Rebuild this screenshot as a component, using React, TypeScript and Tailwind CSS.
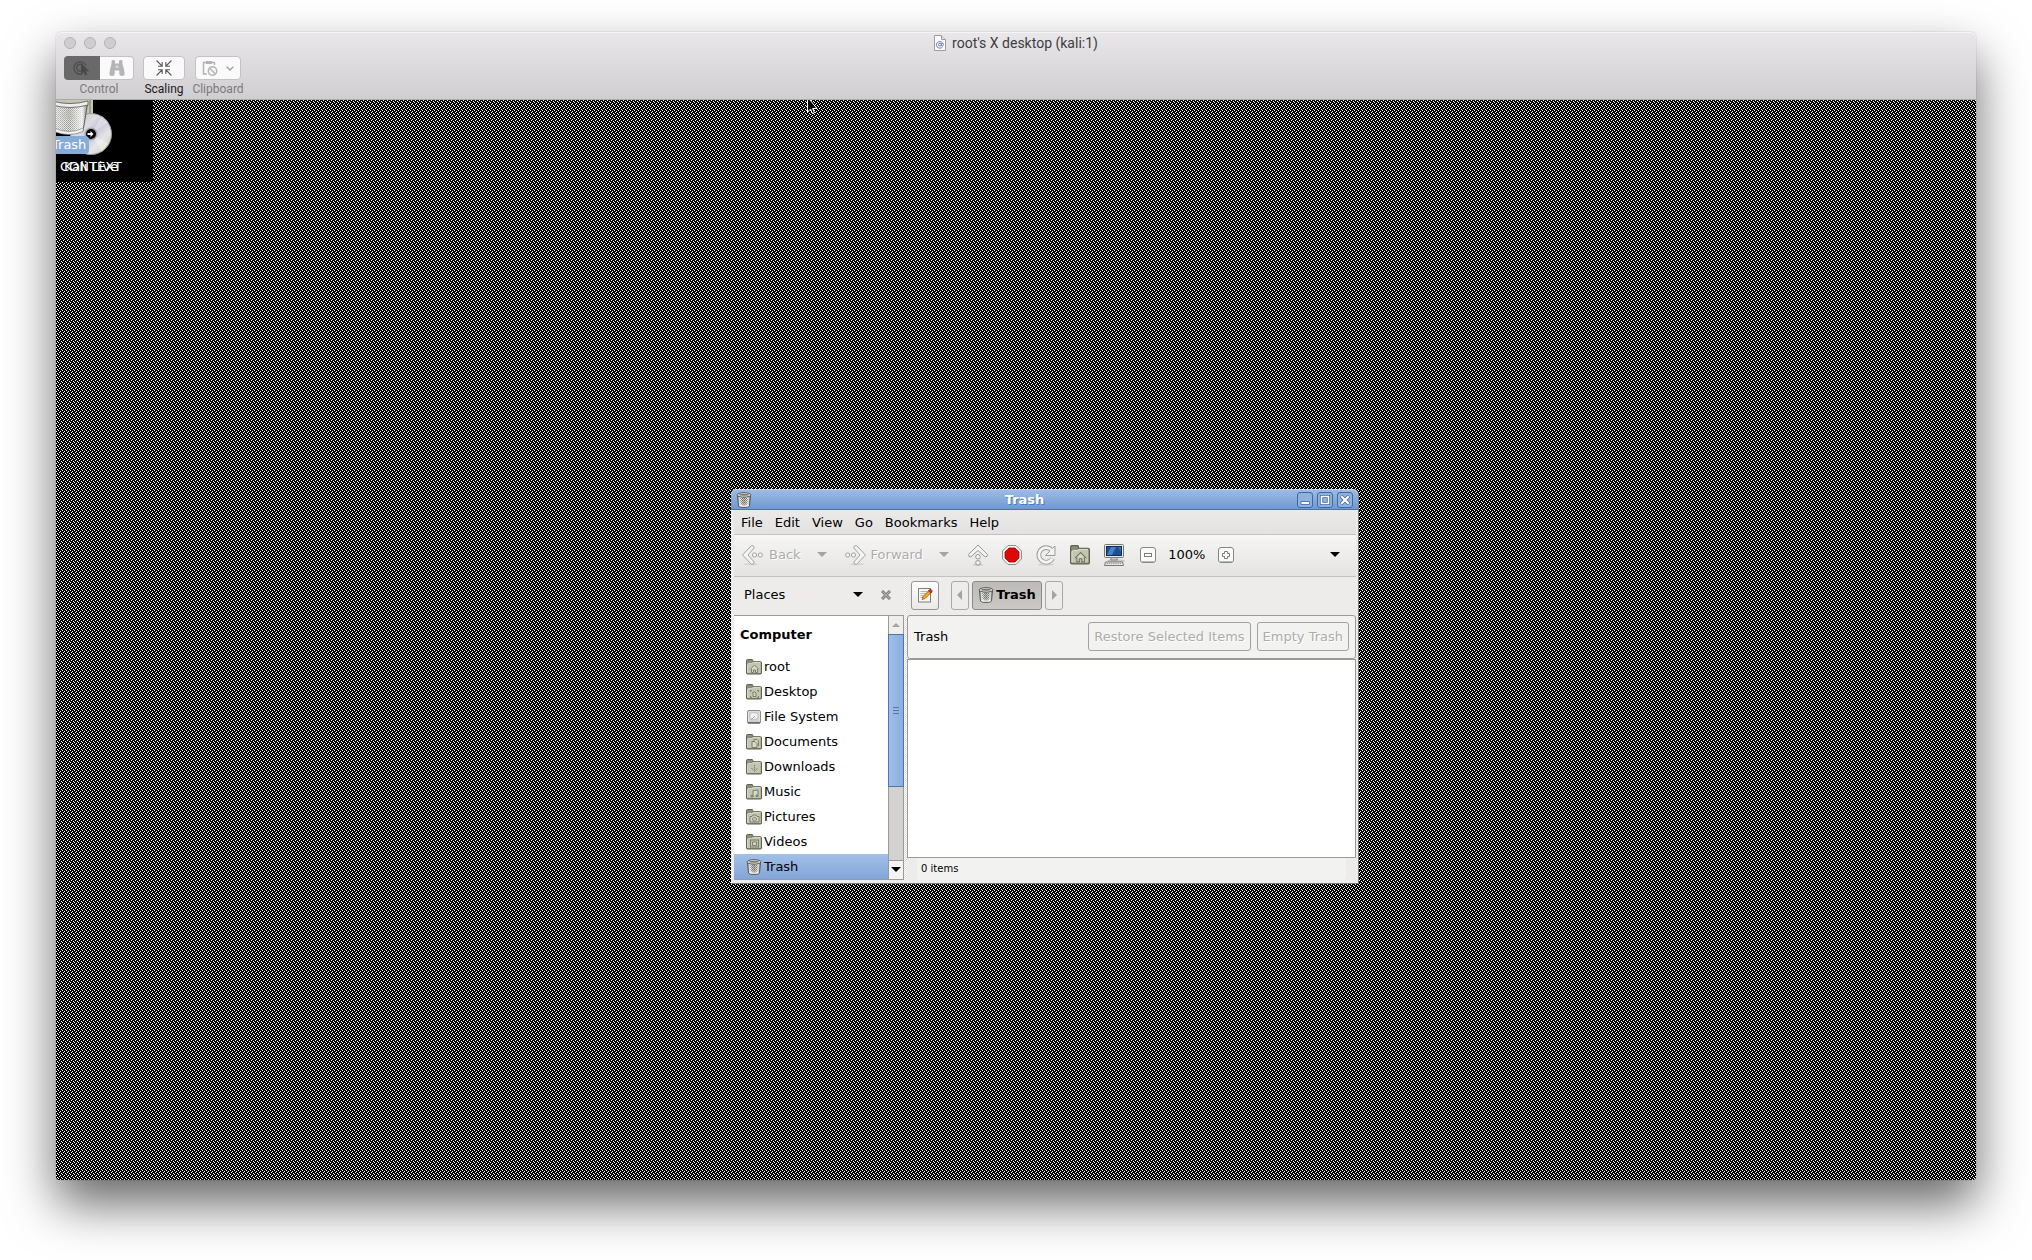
import React from 'react';

const TrashIcon: React.FC<{ className?: string }> = ({ className }) => (
  <svg className={className} viewBox="0 0 16 16" aria-hidden="true">
    <defs>
      <linearGradient id="binBody" x1="0" x2="1" y1="0" y2="0">
        <stop offset="0" stopColor="#8d8f8a" />
        <stop offset=".2" stopColor="#f4f4f2" />
        <stop offset=".5" stopColor="#b4b6b1" />
        <stop offset=".8" stopColor="#f0f0ee" />
        <stop offset="1" stopColor="#7c7e7a" />
      </linearGradient>
      <pattern id="binMesh" width="2" height="2" patternUnits="userSpaceOnUse">
        <rect width="1" height="1" fill="#4a4c48" />
        <rect x="1" y="1" width="1" height="1" fill="#6b6d69" />
      </pattern>
    </defs>
    <path d="M1.500 3.500 2.500 14c.6 1.900 10.400 1.900 11 0l1-10.500z" fill="url(#binBody)" stroke="#4a4c48" strokeWidth=".9" />
    <path d="M4 5.500h8l-.6 7H4.600z" fill="url(#binMesh)" opacity=".7" />
    <ellipse cx="8" cy="2.900" rx="7" ry="2.200" fill="#eeeeec" stroke="#4a4c48" strokeWidth=".9" />
    <ellipse cx="8" cy="2.800" rx="5" ry="1" fill="#7a7c78" />
    <path d="M3.200 13.400c2 1.200 7.600 1.200 9.600 0" fill="none" stroke="#f4f4f2" strokeWidth=".9" />
  </svg>
);

const folderGlyphs: Record<string, React.ReactNode> = {
  home: <path d="M4 10.500 8.500 6l4.500 4.500M5.500 10v3.500h2v-2.500h2v2.500h2V10" />,
  desktop: <path d="M4.500 8V6.500H6M11 6.500h1.500V8M12.500 12v1.500H11M6 13.500H4.500V12M7 8h2l1 1v3.500H7z" />,
  documents: <path d="M6 13.500v-6h3l2 2v4zM8 7V5.500h3l1.500 1.500v4.500H11.500" />,
  downloads: <path d="M8.500 6v5M5.500 9l3 3.500 3-3.500" strokeDasharray="1.500 .6" fill="none" />,
  music: <path d="M7 12V6.500l5-.5v5M5 11.500h2v1.500H5zM10 11h2v1.500h-2z" />,
  pictures: <path d="M4 7.500h2l1-1.500h3l1 1.500h2v5.500H4zM8.500 8.200a2 2 0 1 0 .01 0z" />,
  videos: <path d="M4.500 5.500v8M12.500 5.500v8M4.500 6h8M4.500 13h8M6.500 8h4v3.500h-4z" />,
};

const FolderIcon: React.FC<{ glyph: string; className?: string }> = ({ glyph, className }) => (
  <svg className={className} viewBox="0 0 16 16" aria-hidden="true">
    <path d="M.5 14V1.500q0-1 1-1H6q.8 0 .8 1v1.200h7.700q1 0 1 1V14q0 1-1 1h-13q-1 0-1-1z" fill="#8a8d78" stroke="#5f624e" />
    <path d="M1.500 14V5.500q0-1 1-1h3.200l1.500-1H14q.7 0 .7 .8V14z" fill="#c3c7b2" />
    <path d="M1.500 13.800V5.500q0-1 1-1h3.200l1.500-1h7.300" fill="none" stroke="#e0e3d3" strokeWidth=".8" />
    <g fill="#d6d9c8" stroke="#73765f" strokeWidth=".9">{folderGlyphs[glyph]}</g>
  </svg>
);

const DriveIcon: React.FC<{ className?: string }> = ({ className }) => (
  <svg className={className} viewBox="0 0 16 16" aria-hidden="true">
    <rect x="1.500" y="1.500" width="13" height="13" rx="1.500" fill="#e8e8e6" stroke="#8b8d89" />
    <path d="M2 13.500h12" stroke="#6d6f6b" strokeWidth="1.400" />
    <rect x="2.800" y="2.500" width="10.400" height="9.500" rx="1" fill="#d0d2d0" />
    <ellipse cx="8" cy="7" rx="4.200" ry="3.400" fill="#f2f2f0" stroke="#b6b8b4" strokeWidth=".7" />
    <path d="M5 11 9 7" stroke="#a5a7a3" />
  </svg>
);

// Tango-style greyed arrow: a chevron followed by two dots
const ArrowIcon: React.FC<{ className?: string }> = ({ className }) => (
  <svg className={className} viewBox="0 0 24 24" fill="#f4f4f3" stroke="#999b97" strokeWidth=".9" aria-hidden="true">
    <ellipse cx="10" cy="21.200" rx="7" ry="1" fill="#d5d5d3" stroke="none" />
    <path d="M1.500 12 10.500 2.600q2.500-.4 2.700 2.300L7 12l6.200 7.100q-.2 2.500-2.700 2.300z" />
    <circle cx="13.500" cy="12" r="2.100" />
    <circle cx="19.300" cy="12" r="2.100" />
  </svg>
);

const UpIcon = () => (
  <svg className="size-6" viewBox="0 0 24 24" fill="#f4f4f3" stroke="#8d8f8b" strokeWidth=".9" aria-hidden="true">
    <ellipse cx="12" cy="21.800" rx="5" ry="1" fill="#c9c9c7" stroke="none" />
    <path d="M12 2 21.500 11.500q.2 2.500-2.300 2.400L12 7.500l-7.200 6.400q-2.500.1-2.300-2.400z" />
    <circle cx="12" cy="13.800" r="2.300" />
    <circle cx="12" cy="19.800" r="2.300" />
  </svg>
);

const StopIcon = () => (
  <svg className="size-6" viewBox="0 0 24 24" aria-hidden="true">
    <path d="M8 2.500h8L21.500 8v8L16 21.500H8L2.500 16V8z" fill="#f5f5f4" stroke="#8c8e8a" />
    <path d="M9 5h6l4 4v6l-4 4H9l-4-4V9z" fill="#dd0808" stroke="#a80000" strokeWidth=".8" />
  </svg>
);

const ReloadIcon = () => (
  <svg className="size-6" viewBox="0 0 24 24" aria-hidden="true">
    <ellipse cx="12" cy="21.500" rx="8" ry="1.200" fill="#cfcfcd" />
    <path d="M18.500 15.500a7.300 7.300 0 1 1-1-8.500" fill="none" stroke="#9a9c98" strokeWidth="4.600" />
    <path d="M21 3v9.500h-9.500l3.500-3.500 2-2.500z" fill="#f4f4f3" stroke="#9a9c98" />
    <path d="M18.500 15.500a7.300 7.300 0 1 1-1-8.500" fill="none" stroke="#f4f4f3" strokeWidth="2.800" />
  </svg>
);

const ComputerIcon = () => (
  <svg className="size-6" viewBox="0 0 24 24" aria-hidden="true">
    <ellipse cx="14" cy="18" rx="9" ry="1.800" fill="#c4c4c2" />
    <rect x="2.500" y="1.500" width="19" height="13" rx="1" fill="#e8e9e6" stroke="#777a73" />
    <rect x="4.500" y="3.500" width="15" height="9" fill="#1d4f96" stroke="#0f2b57" />
    <path d="M5 12 9 4h5l-4 8z" fill="#4a80c8" />
    <path d="M16 4h3v5z" fill="#3a6eb5" />
    <path d="M9.500 14.500h5l1 2.500h-7z" fill="#c7c9c4" stroke="#777a73" strokeWidth=".8" />
    <path d="M3.500 19h17l1 3.500h-19z" fill="#f2f2f0" stroke="#6a6c67" strokeWidth=".9" />
    <path d="M4.500 20.700h15" stroke="#8b8d88" strokeDasharray="1.500 .7" />
  </svg>
);

const ZoomIcon: React.FC<{ plus?: boolean }> = ({ plus }) => (
  <svg className="size-4" viewBox="0 0 16 16" aria-hidden="true">
    <rect x=".5" y=".5" width="15" height="15" rx="2.500" fill="#fafaf9" stroke="#858783" />
    <path d="M1.500 14.500h13" stroke="#b9bbb7" />
    {plus ? (
      <path d="M6.500 4.500h3v2h2v3h-2v2h-3v-2h-2v-3h2z" fill="#fff" stroke="#777975" />
    ) : (
      <rect x="4.500" y="6.500" width="7" height="3" fill="#fff" stroke="#777975" />
    )}
  </svg>
);

const Triangle: React.FC<{ className?: string; dir?: 'down' | 'left' | 'right' | 'up' }> = ({ className, dir = 'down' }) => {
  const paths = { down: 'M0 2h10L5 7z', up: 'M1 7h8L5 3z', left: 'M7 0v10L2 5z', right: 'M3 0v10l5-5z' };
  return (
    <svg className={`size-[10px] ${className ?? ''}`} viewBox="0 0 10 10" fill="currentColor" aria-hidden="true">
      <path d={paths[dir]} />
    </svg>
  );
};

const places = [
  { label: 'root', glyph: 'home' },
  { label: 'Desktop', glyph: 'desktop' },
  { label: 'File System', glyph: 'drive' },
  { label: 'Documents', glyph: 'documents' },
  { label: 'Downloads', glyph: 'downloads' },
  { label: 'Music', glyph: 'music' },
  { label: 'Pictures', glyph: 'pictures' },
  { label: 'Videos', glyph: 'videos' },
  { label: 'Trash', glyph: 'trash' },
];

const PlaceIcon: React.FC<{ glyph: string }> = ({ glyph }) => {
  if (glyph === 'trash') return <TrashIcon className="size-4" />;
  if (glyph === 'drive') return <DriveIcon className="size-4" />;
  return <FolderIcon glyph={glyph} className="size-4" />;
};

const toolButton = 'flex h-full w-[34px] items-center justify-center';

const MacToolbar = () => (
  <header className="h-[68px] shrink-0 rounded-t-md border-b border-[#a9a8aa] bg-linear-to-b from-[#e9e7ea] to-[#d0ced1] font-[Roboto,sans-serif] shadow-[inset_0_1px_0_#f6f5f6]">
    <div className="grid h-[22px] grid-cols-3 items-center px-2">
      <div className="flex gap-2">
        {['Close', 'Minimize', 'Zoom'].map((name) => (
          <button key={name} aria-label={name} className="size-3 rounded-full border border-[#b4b2b5] bg-[#cfcdd0]" />
        ))}
      </div>
      <h1 className="flex items-center justify-center gap-[6px] text-[14px] leading-5 text-[#3d3c3e]">
        <svg className="h-4 w-3" viewBox="0 0 12 16" aria-hidden="true">
          <path d="M.5.500h7l4 4v11H.5z" fill="#fbfbfc" stroke="#9c9c9e" />
          <path d="M7.500.500v4h4" fill="#e2e2e4" stroke="#9c9c9e" />
          <g fill="none" stroke="#7078bb">
            <path d="M8.500 12a3.500 3.300 0 1 1 .8-2.600q0 1.600-1 1.600t-.8-1.500l.3-1.500" />
            <circle cx="5.900" cy="9.600" r="1.400" />
          </g>
        </svg>
        root's X desktop (kali:1)
      </h1>
    </div>
    <div className="flex gap-[9px] px-2 pt-[2px] text-[12px] leading-4 text-[#7c7a7d]">
      <div className="flex w-[70px] flex-col items-center gap-px">
        <div className="flex h-6 w-full">
          <button aria-label="Control" className="flex w-9 items-center justify-center rounded-l bg-[#696969]">
            <svg className="h-4 w-[18px]" viewBox="0 0 18 16" aria-hidden="true">
              <g fill="none" stroke="#4c4c4c" strokeWidth="1.200">
                <path d="M9.500 14A6.300 6.300 0 1 1 13 5.500" />
                <path d="M8 11a3.400 3.400 0 1 1 2-5" />
              </g>
              <path d="M8 3v11.500l2.700-2.400 1.600 3.400 2-1-1.600-3.200h3.500z" fill="#484848" />
            </svg>
          </button>
          <button aria-label="Observe" className="flex flex-1 items-center justify-center rounded-r border border-l-0 border-[#c3c1c4] bg-[#fbfafb]">
            <svg className="size-4" viewBox="0 0 16 16" fill="#b5b4b6" aria-hidden="true">
              <path d="M2.500 1.200q0-1.200 1.700-1.200T6 1.200V3.500h4V1.200Q10 0 11.800 0t1.700 1.200V4l1.300 4.500.9 5.500q0 2-2.700 2t-2.700-2v-3.500H5.700V14q0 2-2.700 2T.3 14l.9-5.500L2.500 4z" />
              <path d="M6.500 5.500h3v2.500h-3z" fill="#d6d5d7" />
            </svg>
          </button>
        </div>
        <span>Control</span>
      </div>
      <div className="flex w-[42px] flex-col items-center gap-px">
        <button aria-label="Scaling" className="flex h-6 w-full items-center justify-center rounded border border-[#c3c1c4] bg-[#fbfafb]">
          <svg className="size-4" viewBox="0 0 16 16" fill="none" stroke="#5a595b" strokeWidth="1.100" aria-hidden="true">
            <path d="M.5.500 6 6M2 6.200h4.200V2M15.500.500 10 6M14 6.200H9.800V2M.5 15.500 6 10M2 9.800h4.200V14M15.500 15.500 10 10M14 9.800H9.800V14" />
          </svg>
        </button>
        <span className="text-[#1b1b1b]">Scaling</span>
      </div>
      <div className="flex w-12 flex-col items-center gap-px">
        <button aria-label="Clipboard" className="flex h-6 w-[46px] items-center justify-center gap-2 rounded border border-[#c3c1c4] bg-[#fbfafb]">
          <svg className="size-4" viewBox="0 0 16 16" fill="none" stroke="#b3b2b4" strokeWidth="1.500" aria-hidden="true">
            <path d="M5 14H1.500V2.500H12.500V5" />
            <path d="M4 1h6v3H4z" fill="#b3b2b4" stroke="none" />
            <circle cx="10.500" cy="11" r="4.200" />
            <path d="M7.700 8.200 13.300 13.800" />
          </svg>
          <svg className="h-[5px] w-2" viewBox="0 0 8 5" fill="none" stroke="#a1a0a2" strokeWidth="1.400" aria-hidden="true">
            <path d="M.7.700 4 4 7.300.700" />
          </svg>
        </button>
        <span>Clipboard</span>
      </div>
    </div>
  </header>
);

// The classic X11 root weave
const RootWeave = () => (
  <svg className="absolute inset-0 size-full" shapeRendering="crispEdges" aria-hidden="true">
    <defs>
      <pattern id="weave" width="4" height="4" patternUnits="userSpaceOnUse">
        <rect width="4" height="4" fill="#000" />
        <path d="M3 0h1v1H3zM1 1h1v1H1zM2 2h1v1H2zM0 3h1v1H0z" fill="#fff" />
      </pattern>
    </defs>
    <rect width="100%" height="100%" fill="url(#weave)" />
  </svg>
);

const DesktopIcons = () => (
  <div className="absolute top-0 left-0 h-[82px] w-[97px] overflow-hidden bg-black text-[13px] leading-4 text-white">
    <svg className="absolute top-0 left-0 h-14 w-[60px]" viewBox="0 0 60 56" aria-hidden="true">
      <defs>
        <linearGradient id="disc" x1="0" y1="0" x2="1" y2="1">
          <stop offset="0" stopColor="#b9b9bd" />
          <stop offset=".35" stopColor="#dcdce2" />
          <stop offset=".5" stopColor="#c5c3d6" />
          <stop offset=".7" stopColor="#e6e6ea" />
          <stop offset=".85" stopColor="#d8d7bf" />
          <stop offset="1" stopColor="#bcbcc0" />
        </linearGradient>
        <linearGradient id="bigShade" x1="0" x2="1" y1="0" y2="0">
          <stop offset="0" stopColor="#fff" stopOpacity=".5" />
          <stop offset=".5" stopColor="#fff" stopOpacity="0" />
          <stop offset=".85" stopColor="#fff" stopOpacity=".75" />
          <stop offset="1" stopColor="#777" stopOpacity=".8" />
        </linearGradient>
        <pattern id="bigMesh" width="2" height="2" patternUnits="userSpaceOnUse">
          <rect width="2" height="2" fill="#e2e3e0" />
          <rect width="1" height="1" fill="#8d8f8b" />
          <rect x="1" y="1" width="1" height="1" fill="#a4a6a2" />
        </pattern>
      </defs>
      <path d="M0 0h37v14H0z" fill="#c5c7b3" />
      <path d="M34 0v14" stroke="#77796a" />
      <circle cx="35" cy="34" r="20.500" fill="url(#disc)" stroke="#9a9a9e" />
      <path d="M35 34 46 16l6 6zM35 34l17 9-6 9z" fill="#fff" opacity=".35" />
      <circle cx="35" cy="34" r="6.500" fill="#a5a5ab" />
      <circle cx="35" cy="34" r="5" fill="#050505" />
      <path d="M31.500 33h3v-2l3 3-3 3v-2h-3z" fill="#fff" />
      <path d="M-4 4 0 31q14 6 27 0l4.500-27z" fill="url(#bigMesh)" />
      <path d="M6 15 13 8l7 7v4H6z" fill="#b9bbae" opacity=".6" />
      <path d="M-4 4 0 31q14 6 27 0l4.500-27z" fill="url(#bigShade)" stroke="#5c5e5a" />
      <path d="M-2 28q15 7 29.500 0l-.5 3.500q-14 6-29 0z" fill="#f3f3f1" stroke="#777" strokeWidth=".6" />
      <path d="M-4 1q18 5 36 0v4q-18 5-36 0z" fill="#eeeeec" stroke="#555753" strokeWidth=".8" />
    </svg>
    <span className="absolute top-9 -left-2 rounded bg-[#86abd9] py-px pr-[3px] pl-1 whitespace-nowrap">Trash</span>
    <span className="absolute top-[59px] left-1">CONTEXT</span>
    <span className="absolute top-[59px] left-2 whitespace-nowrap">Kali Live</span>
  </div>
);

const TrashWindow = () => (
  <section className="absolute top-[389px] left-[675px] w-[628px] rounded-t-md border-r border-b border-[#7d7c7a] bg-[#edeceb] text-[13px] leading-4 text-black">
    <div className="flex h-[21px] items-center rounded-t-md border-t border-b border-t-[#c4d7f0] border-b-[#4a74ac] bg-linear-to-b from-[#9cbbe6] to-[#7199cd] px-[5px]">
      <TrashIcon className="size-4" />
      <h2 className="flex-1 text-center font-bold text-white [text-shadow:1px_1px_0_#4f79b4]">Trash</h2>
      <div className="flex gap-1">
        <button aria-label="Minimize" className="size-4 rounded-[3px] border border-[#40669b] bg-[#8fb1de]">
          <svg viewBox="0 0 14 14" aria-hidden="true"><path d="M3 8.500h8.500v3H3z" fill="#fff" stroke="#40669b" strokeWidth=".8" /></svg>
        </button>
        <button aria-label="Maximize" className="size-4 rounded-[3px] border border-[#40669b] bg-[#8fb1de]">
          <svg viewBox="0 0 14 14" aria-hidden="true" fill="none"><path d="M3.500 3.500h7v7h-7z" stroke="#40669b" strokeWidth="3.200" /><path d="M3.500 3.500h7v7h-7z" stroke="#fff" strokeWidth="1.600" /></svg>
        </button>
        <button aria-label="Close" className="size-4 rounded-[3px] border border-[#40669b] bg-[#8fb1de]">
          <svg viewBox="0 0 14 14" aria-hidden="true"><path d="m3 3 8 8M11 3l-8 8" stroke="#40669b" strokeWidth="3.800" /><path d="m3.300 3.300 7.400 7.400M10.700 3.300l-7.400 7.400" stroke="#fff" strokeWidth="2.200" /></svg>
        </button>
      </div>
    </div>

    <div className="pr-[2px] pb-[3px] pl-[3px]">
      <nav className="flex h-[25px] items-center border-b border-[#c3c2c1] bg-linear-to-b from-[#ebeae9] to-[#e3e2e1] pt-[2px] pl-px">
        {['File', 'Edit', 'View', 'Go', 'Bookmarks', 'Help'].map((item) => (
          <button key={item} className="px-[6px]">{item}</button>
        ))}
      </nav>

      <div className="flex h-[42px] items-center border-b border-[#c3c2c1] bg-linear-to-b from-[#f6f6f5] to-[#e4e3e2] pb-[2px]">
        <button disabled className="flex h-full items-center gap-1 px-[7px] text-[#aeacaa] [text-shadow:1px_1px_0_#fff]">
          <ArrowIcon className="size-6" />
          Back
        </button>
        <button disabled aria-label="Back history" className="flex h-full w-7 items-center justify-center text-[#a5a3a1]"><Triangle /></button>
        <button disabled className="flex h-full items-center gap-1 px-[7px] text-[#aeacaa] [text-shadow:1px_1px_0_#fff]">
          <ArrowIcon className="size-6 -scale-x-100" />
          Forward
        </button>
        <button disabled aria-label="Forward history" className="mr-[3px] flex h-full w-7 items-center justify-center text-[#a5a3a1]"><Triangle /></button>
        <button aria-label="Up" className={toolButton}><UpIcon /></button>
        <button aria-label="Stop" className={toolButton}><StopIcon /></button>
        <button aria-label="Reload" className={toolButton}><ReloadIcon /></button>
        <button aria-label="Home" className={toolButton}><FolderIcon glyph="home" className="size-5" /></button>
        <button aria-label="Computer" className={toolButton}><ComputerIcon /></button>
        <button aria-label="Zoom out" className={toolButton}><ZoomIcon /></button>
        <button className="w-11 text-center">100%</button>
        <button aria-label="Zoom in" className={toolButton}><ZoomIcon plus /></button>
        <button aria-label="More" className="mr-4 ml-auto"><Triangle /></button>
      </div>

      <div className="flex">
        <aside className="flex w-[170px] flex-col">
          <div className="flex h-[38px] items-center gap-[18px] pr-[13px] pb-[2px] pl-[10px]">
            <button className="flex flex-1 items-center justify-between">
              Places
              <Triangle />
            </button>
            <button aria-label="Close side pane">
              <svg className="size-[10px]" viewBox="0 0 10 10" aria-hidden="true">
                <path d="m1 1 8 8M9 1 1 9" stroke="#777672" strokeWidth="3" />
                <path d="m1.400 1.400 7.200 7.200M8.600 1.400 1.400 8.600" stroke="#b5b4b1" strokeWidth="1.100" />
              </svg>
            </button>
          </div>
          <div className="flex border-t border-b border-[#9c9a98] bg-white">
            <div className="min-w-0 flex-1">
              <h3 className="h-[38px] pt-[11px] pl-[6px] font-bold">Computer</h3>
              <ul>
                {places.map(({ label, glyph }) => (
                  <li key={label}>
                    <button
                      className={`flex h-[25px] w-full items-center gap-[2px] pl-3 text-left ${
                        label === 'Trash' ? 'bg-linear-to-b from-[#a3c0e8] to-[#82a6d8]' : ''
                      }`}
                    >
                      <PlaceIcon glyph={glyph} />
                      {label}
                    </button>
                  </li>
                ))}
              </ul>
            </div>
            <div className="flex w-4 flex-col border-r border-l border-[#9c9a98] bg-[#d4d2d0]">
              <button aria-label="Scroll up" className="flex h-[18px] items-center justify-center bg-[#efeeed] text-[#a5a3a1]"><Triangle dir="up" /></button>
              <div className="-mx-px flex h-[153px] flex-col items-center justify-center gap-[2px] border border-[#4a76b5] bg-linear-to-r from-[#a0bfe9] to-[#8aaede]">
                <span className="h-px w-[6px] bg-[#5478ab]" />
                <span className="h-px w-[6px] bg-[#5478ab]" />
                <span className="h-px w-[6px] bg-[#5478ab]" />
              </div>
              <button aria-label="Scroll down" className="mt-auto flex h-[19px] items-center justify-center border-t border-[#9c9a98] bg-[#f5f4f3]"><Triangle /></button>
            </div>
          </div>
        </aside>

        <div className="w-[3px] bg-[repeating-conic-gradient(#fbfbfb_0_25%,#e4e3e2_0_50%)] bg-[length:2px_2px]" />

        <main className="flex min-w-0 flex-1 flex-col">
          <div className="flex h-[38px] items-center gap-[3px] pb-[2px] pl-1">
            <button aria-label="Edit location" className="mr-[9px] flex h-[29px] w-7 items-center justify-center rounded-[3px] border border-[#989693] bg-linear-to-b from-[#fdfdfd] to-[#eae9e8]">
              <svg className="size-4" viewBox="0 0 16 16" aria-hidden="true">
                <rect x="1.500" y="1.500" width="12" height="13.500" fill="#f6f6f4" stroke="#7f817c" />
                <path d="M3.500 4.500h7M3.500 6.500h6M3.500 8.500h4M3.500 10.500h2" stroke="#b4b6b2" />
                <path d="m5 12.500 1-3 6.500-6.500 2.300 2L8 11.500z" fill="#f5a623" stroke="#9a5a05" strokeWidth=".8" />
                <path d="m11.500 4 1.300-1.500q1.200-.6 2.500 1.500L14 6z" fill="#e03030" stroke="#8f1515" strokeWidth=".7" />
              </svg>
            </button>
            <button disabled aria-label="Previous" className="flex h-[29px] w-[18px] items-center justify-center rounded-[3px] border border-[#aaa8a5] text-[#a5a3a1]"><Triangle dir="left" /></button>
            <button className="flex h-[29px] w-[70px] items-center justify-center gap-[2px] rounded-[3px] border border-[#8d8b88] bg-linear-to-b from-[#bdbab7] to-[#cbc8c5] font-bold">
              <TrashIcon className="size-4" />
              Trash
            </button>
            <button disabled aria-label="Next" className="flex h-[29px] w-[18px] items-center justify-center rounded-[3px] border border-[#aaa8a5] text-[#a5a3a1]"><Triangle dir="right" /></button>
          </div>
          <div className="flex h-11 items-center gap-[6px] rounded-[3px] border border-[#9c9a98] bg-[#f2f2f0] px-[6px] pb-px">
            <span className="flex-1">Trash</span>
            <button disabled className="h-[29px] rounded-[3px] border border-[#a3a19f] px-[5px] text-[#aeacaa] [text-shadow:1px_1px_0_#fff]">Restore Selected Items</button>
            <button disabled className="h-[29px] rounded-[3px] border border-[#a3a19f] px-[5px] text-[#aeacaa] [text-shadow:1px_1px_0_#fff]">Empty Trash</button>
          </div>
          <div className="flex-1 border border-[#9c9a98] bg-white" />
          <footer className="mr-[10px] ml-[10px] h-[22px] rounded-b bg-[#f2f2f0] pt-[3px] pl-1 text-[10px]">0 items</footer>
        </main>
      </div>
    </div>
  </section>
);

export default function App() {
  return (
    <div className="flex min-h-screen overflow-hidden bg-white px-14 pt-8 pb-20">
      <div className="flex flex-1 flex-col rounded-md shadow-[0_0_1px_rgba(0,0,0,0.5),0_24px_50px_rgba(0,0,0,0.6)]">
        <MacToolbar />
        <div className="relative flex-1 overflow-hidden rounded-b bg-black font-['DejaVu_Sans',sans-serif]">
          <RootWeave />
          <DesktopIcons />
          <svg className="absolute top-0 left-[751px] h-[15px] w-[11px]" viewBox="0 0 11 15" aria-hidden="true">
            <path d="M.5-3v15L3.500 9l2 4.500 2-.8L5.500 8.500H10z" fill="#000" stroke="#fff" />
          </svg>
          <TrashWindow />
        </div>
      </div>
    </div>
  );
}
